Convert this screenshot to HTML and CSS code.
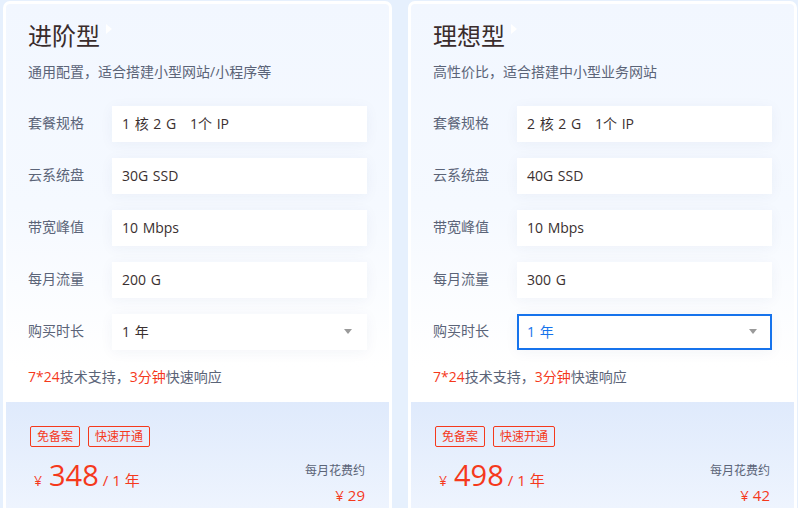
FILE: index.html
```html
<!DOCTYPE html>
<html lang="zh-CN">
<head>
<meta charset="utf-8">
<title>套餐</title>
<link rel="stylesheet" href="styles.css">
</head>
<body>
<div class="page">
  <section class="card">
    <div class="top">
      <h2 class="title">进阶型<span class="tri"></span></h2>
      <p class="desc">通用配置，适合搭建小型网站/小程序等</p>
      <div class="rows">
        <div class="row"><span class="label">套餐规格</span><div class="box">1 核 2 G   1个 IP</div></div>
        <div class="row"><span class="label">云系统盘</span><div class="box">30G SSD</div></div>
        <div class="row"><span class="label">带宽峰值</span><div class="box">10 Mbps</div></div>
        <div class="row"><span class="label">每月流量</span><div class="box">200 G</div></div>
        <div class="row"><span class="label">购买时长</span><div class="box select"><span>1 年</span><span class="arrow"></span></div></div>
      </div>
      <p class="note"><em>7*24</em>技术支持，<em>3分钟</em>快速响应</p>
    </div>
    <div class="bottom">
      <div class="tags"><span class="tag">免备案</span><span class="tag">快速开通</span></div>
      <div class="price-row">
        <div class="price"><span class="cur">¥</span><span class="num">348</span><span class="per">/ 1 年</span></div>
        <div class="monthly"><span class="m-label">每月花费约</span><span class="m-val">¥ 29</span></div>
      </div>
    </div>
  </section>
  <section class="card">
    <div class="top">
      <h2 class="title">理想型<span class="tri"></span></h2>
      <p class="desc">高性价比，适合搭建中小型业务网站</p>
      <div class="rows">
        <div class="row"><span class="label">套餐规格</span><div class="box">2 核 2 G   1个 IP</div></div>
        <div class="row"><span class="label">云系统盘</span><div class="box">40G SSD</div></div>
        <div class="row"><span class="label">带宽峰值</span><div class="box">10 Mbps</div></div>
        <div class="row"><span class="label">每月流量</span><div class="box">300 G</div></div>
        <div class="row"><span class="label">购买时长</span><div class="box select active"><span>1 年</span><span class="arrow"></span></div></div>
      </div>
      <p class="note"><em>7*24</em>技术支持，<em>3分钟</em>快速响应</p>
    </div>
    <div class="bottom">
      <div class="tags"><span class="tag">免备案</span><span class="tag">快速开通</span></div>
      <div class="price-row">
        <div class="price"><span class="cur">¥</span><span class="num">498</span><span class="per">/ 1 年</span></div>
        <div class="monthly"><span class="m-label">每月花费约</span><span class="m-val">¥ 42</span></div>
      </div>
    </div>
  </section>
</div>
</body>
</html>
```
FILE: styles.css
```css
* { box-sizing: border-box; }
html, body { margin: 0; padding: 0; }
body {
  background: #e6f0fd;
  font-family: "Open Sans", "Noto Sans CJK SC", sans-serif;
  width: 798px;
  height: 508px;
  overflow: hidden;
}
.page {
  display: flex;
  gap: 16px;
  padding: 1px 0 0 3px;
}
.card {
  width: 389px;
  height: 507px;
  border: 3px solid #ffffff;
  border-bottom: 0;
  border-radius: 7px 7px 0 0;
  background: linear-gradient(180deg, #f2f7ff 0%, #f5f9ff 40%, #ffffff 72%);
  display: flex;
  flex-direction: column;
}
.top {
  padding: 16px 22px 0 22px;
}
.title {
  margin: 0;
  font-size: 24px;
  line-height: 32px;
  font-weight: 400;
  color: #3a2c2c;
  display: flex;
  align-items: flex-start;
}
.tri {
  width: 0;
  height: 0;
  border-left: 6px solid #ffffff;
  border-top: 5px solid transparent;
  border-bottom: 5px solid transparent;
  margin: 4px 0 0 6px;
}
.desc {
  margin: 10px 0 0 0;
  font-size: 14px;
  line-height: 20px;
  color: #5b6478;
}
.rows {
  margin-top: 24px;
  display: flex;
  flex-direction: column;
  gap: 16px;
}
.row {
  display: flex;
  align-items: center;
  height: 36px;
}
.label {
  width: 84px;
  font-size: 14px;
  line-height: 20px;
  margin-top: -2px;
  color: #5b6478;
}
.box {
  width: 255px;
  height: 36px;
  background: #ffffff;
  padding: 0 10px 2px 10px;
  display: flex;
  align-items: center;
  font-size: 14px;
  color: #3a3030;
  white-space: pre;
  word-spacing: 1px;
  box-shadow: 0 2px 14px rgba(30, 60, 120, 0.05);
}
.select {
  justify-content: space-between;
  padding-right: 15px;
}
.arrow {
  width: 0;
  height: 0;
  border-top: 5px solid #9a9a9a;
  border-left: 4px solid transparent;
  border-right: 4px solid transparent;
}
.active {
  border: 2px solid #1673ec;
  padding-left: 8px;
  padding-right: 13px;
  color: #1673ec;
}
.note {
  margin: 17px 0 15px 0;
  font-size: 14px;
  line-height: 20px;
  color: #5b6478;
}
.note em {
  font-style: normal;
  color: #f5391c;
}
.bottom {
  flex: 1;
  background: linear-gradient(180deg, #dfeafc 0%, #eef4fe 100%);
  padding: 24px 24px 0 24px;
}
.tags {
  display: flex;
  gap: 8px;
}
.tag {
  border: 1px solid #f5391c;
  border-radius: 2px;
  color: #f5391c;
  font-size: 12px;
  line-height: 19px;
  padding: 0 6px;
}
.price-row {
  margin-top: 12px;
  display: flex;
  justify-content: space-between;
  align-items: flex-start;
}
.price {
  display: flex;
  align-items: baseline;
  color: #f5391c;
  padding-left: 4px;
}
.cur {
  font-size: 14px;
  margin-right: 7px;
}
.num {
  font-size: 29px;
  line-height: 32px;
}
.per {
  font-size: 15px;
  margin-left: 4px;
}
.monthly {
  display: flex;
  flex-direction: column;
  align-items: flex-end;
  padding-top: 3px;
}
.m-label {
  font-size: 12px;
  line-height: 18px;
  color: #5b6478;
}
.m-val {
  margin-top: 5px;
  font-size: 15px;
  line-height: 20px;
  color: #f5391c;
}
```
